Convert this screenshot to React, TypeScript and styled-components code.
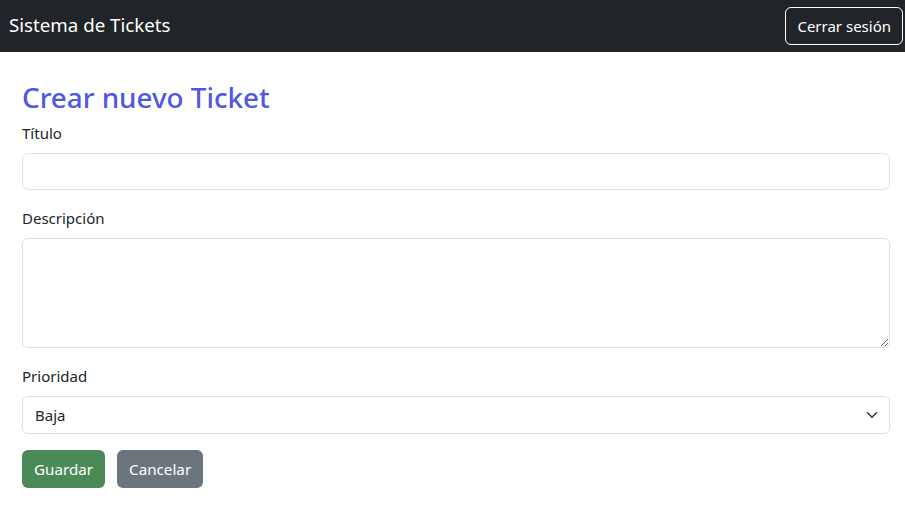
import React from 'react';
import styled, { createGlobalStyle } from 'styled-components';

const GlobalStyle = createGlobalStyle`
  * {
    box-sizing: border-box;
  }

  body {
    margin: 0;
    background: #ffffff;
    color: #212529;
    font-family: 'Noto Sans', 'Open Sans', sans-serif;
    font-size: 15px;
    line-height: 1.5;
  }
`;

const Navbar = styled.nav`
  height: 52px;
  background: #212529;
  display: flex;
  align-items: center;
  justify-content: space-between;
  padding: 0 2px 0 9px;
`;

const Brand = styled.span`
  color: #ffffff;
  font-size: 18.7px;
  margin-top: -2px;
`;

const OutlineButton = styled.button`
  height: 38px;
  padding: 0 11px;
  background: transparent;
  color: #ffffff;
  border: 1px solid #ffffff;
  border-radius: 6px;
  font-family: inherit;
  font-size: 15px;
  cursor: pointer;
`;

const Main = styled.main`
  padding: 26px 15px 0 22px;
`;

const Title = styled.h2`
  margin: 0 0 5px;
  color: #5058e0;
  font-size: 27.8px;
  font-weight: 500;
  line-height: 38px;
`;

const Field = styled.div`
  display: flex;
  flex-direction: column;
  margin-bottom: 16px;
`;

const Label = styled.label`
  margin-bottom: 8px;
  line-height: 24px;
`;

const controlStyles = `
  width: 100%;
  border: 1px solid #dee2e6;
  border-radius: 6px;
  background: #ffffff;
  color: #212529;
  font-family: inherit;
  font-size: 15px;
  padding: 6px 12px;
  outline: none;
`;

const Input = styled.input`
  ${controlStyles}
  height: 37px;
`;

const TextArea = styled.textarea`
  ${controlStyles}
  height: 110px;
  resize: vertical;
`;

const SelectWrap = styled.div`
  position: relative;
`;

const Select = styled.select`
  ${controlStyles}
  height: 38px;
  appearance: none;
`;

const Chevron = styled.svg`
  position: absolute;
  right: 12px;
  top: 13px;
  pointer-events: none;
`;

const Actions = styled.div`
  display: flex;
  gap: 12px;
`;

const SolidButton = styled.button<{ $tone: string }>`
  height: 38px;
  padding: 0 12px;
  border: none;
  border-radius: 6px;
  background: ${({ $tone }) => $tone};
  color: #ffffff;
  font-family: inherit;
  font-size: 15.2px;
  cursor: pointer;
`;

export default function App() {
  return (
    <>
      <GlobalStyle />
      <Navbar>
        <Brand>Sistema de Tickets</Brand>
        <OutlineButton>Cerrar sesión</OutlineButton>
      </Navbar>
      <Main>
        <Title>Crear nuevo Ticket</Title>
        <Field>
          <Label htmlFor="titulo">Título</Label>
          <Input id="titulo" type="text" />
        </Field>
        <Field>
          <Label htmlFor="descripcion">Descripción</Label>
          <TextArea id="descripcion" />
        </Field>
        <Field>
          <Label htmlFor="prioridad">Prioridad</Label>
          <SelectWrap>
            <Select id="prioridad" defaultValue="baja">
              <option value="baja">Baja</option>
              <option value="media">Media</option>
              <option value="alta">Alta</option>
            </Select>
            <Chevron width="12" height="12" viewBox="0 0 16 16">
              <path d="m2 5 6 6 6-6" fill="none" stroke="#343a40" strokeWidth="2" strokeLinecap="round" strokeLinejoin="round" />
            </Chevron>
          </SelectWrap>
        </Field>
        <Actions>
          <SolidButton $tone="#4b8a57">Guardar</SolidButton>
          <SolidButton $tone="#6c757d">Cancelar</SolidButton>
        </Actions>
      </Main>
    </>
  );
}
